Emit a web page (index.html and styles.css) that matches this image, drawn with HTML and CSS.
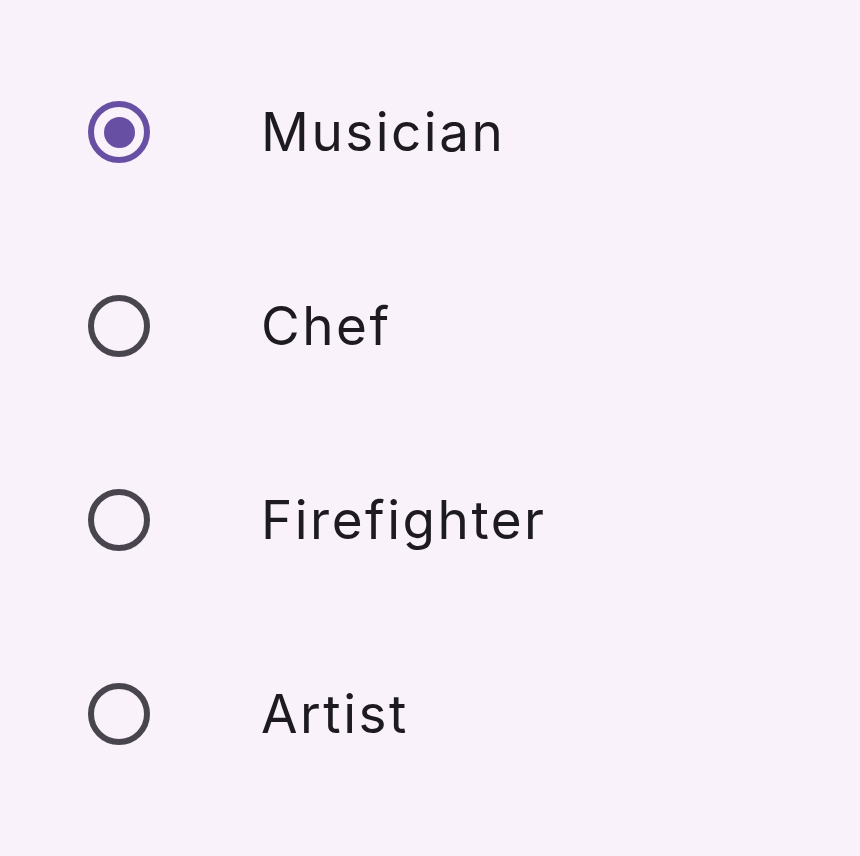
FILE: index.html
```html
<!DOCTYPE html>
<html>
<head>
<meta charset="utf-8">
<link rel="stylesheet" href="styles.css">
</head>
<body>
<div class="list" role="radiogroup">
  <div class="row">
    <span class="radio selected"><span class="dot"></span></span>
    <span class="label">Musician</span>
  </div>
  <div class="row">
    <span class="radio"></span>
    <span class="label">Chef</span>
  </div>
  <div class="row">
    <span class="radio"></span>
    <span class="label">Firefighter</span>
  </div>
  <div class="row">
    <span class="radio"></span>
    <span class="label">Artist</span>
  </div>
</div>
</body>
</html>
```
FILE: styles.css
```css
html, body {
  margin: 0;
  padding: 0;
  background: #f9f2fa;
  height: 100%;
}
body {
  font-family: Inter, Roboto, "Liberation Sans", sans-serif;
  color: #1d1b20;
}
.list {
  display: flex;
  flex-direction: column;
  padding-top: 35px;
}
.row {
  display: flex;
  align-items: center;
  height: 194px;
  padding-left: 88px;
}
.radio {
  box-sizing: border-box;
  width: 62px;
  height: 62px;
  border: 6.5px solid #49454f;
  border-radius: 50%;
  display: flex;
  align-items: center;
  justify-content: center;
  flex: none;
}
.radio.selected {
  border-color: #6750a4;
}
.dot {
  width: 31px;
  height: 31px;
  border-radius: 50%;
  background: #6750a4;
}
.label {
  margin-left: 111px;
  font-size: 53px;
  letter-spacing: 2.5px;
  line-height: 1;
}
```
